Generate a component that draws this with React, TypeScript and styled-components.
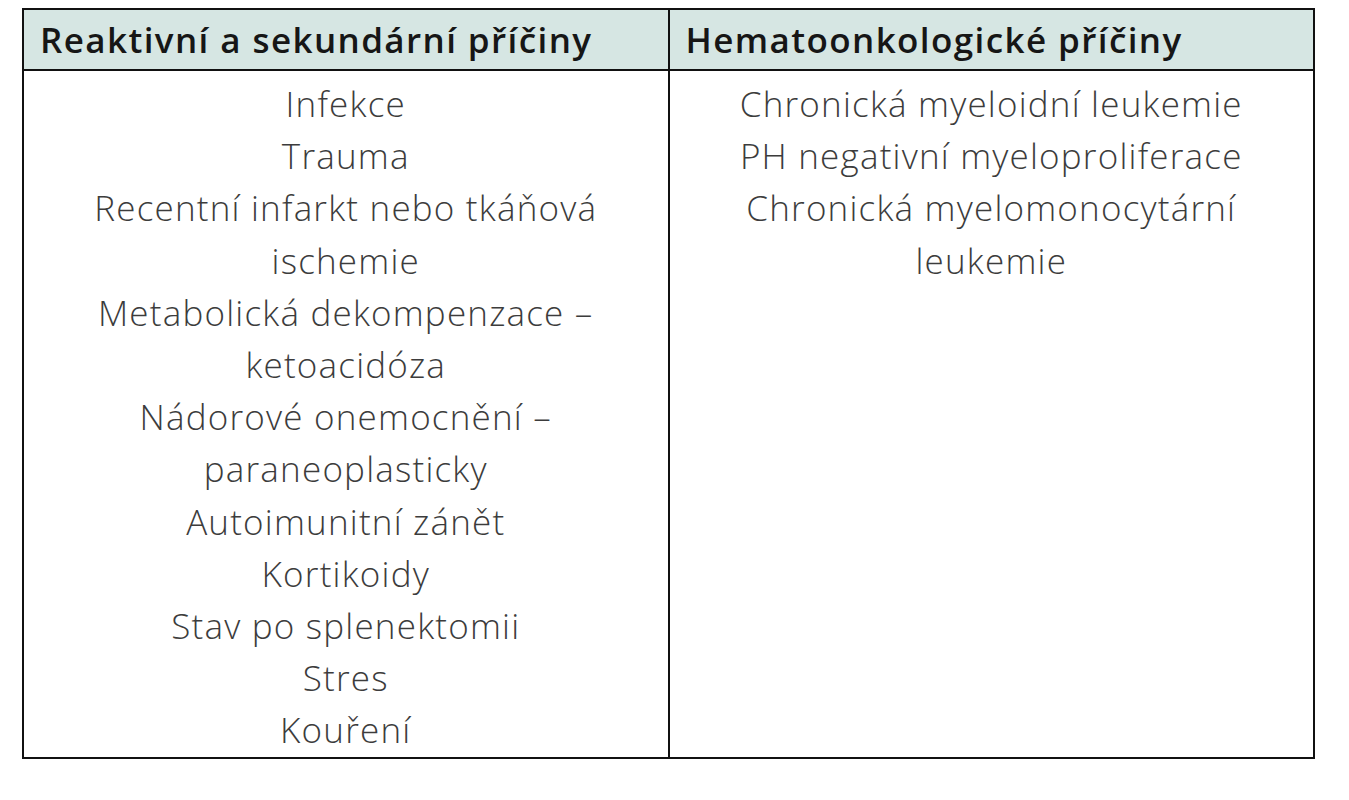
import React from "react";
import styled, { createGlobalStyle } from "styled-components";

const GlobalStyle = createGlobalStyle`
  html, body {
    margin: 0;
    padding: 0;
    background: #ffffff;
  }
`;

const Page = styled.main`
  padding: 8px 0 0 22px;
  font-family: "Open Sans", "Liberation Sans", sans-serif;
`;

const Table = styled.table`
  width: 1293px;
  border-collapse: collapse;
  table-layout: fixed;
  border: 2px solid #111;
`;

const HeadCell = styled.th`
  height: 59px;
  padding: 0 0 0 16px;
  background-color: #d6e6e3;
  border: 2px solid #111;
  text-align: left;
  font-size: 35px;
  font-weight: 600;
  color: #161616;
  letter-spacing: 1.4px;
  white-space: nowrap;
`;

const Cell = styled.td`
  vertical-align: top;
  padding: 7px 0 0;
  border-left: 2px solid #111;
  border-right: 2px solid #111;
  text-align: center;
`;

const List = styled.ul`
  list-style: none;
  margin: 0;
  padding: 0;
`;

const Item = styled.li`
  font-size: 35px;
  font-weight: 300;
  line-height: 52.2px;
  color: #3c3c3c;
  letter-spacing: 1.2px;
`;

const reactive: string[][] = [
  ["Infekce"],
  ["Trauma"],
  ["Recentní infarkt nebo tkáňová", "ischemie"],
  ["Metabolická dekompenzace –", "ketoacidóza"],
  ["Nádorové onemocnění –", "paraneoplasticky"],
  ["Autoimunitní zánět"],
  ["Kortikoidy"],
  ["Stav po splenektomii"],
  ["Stres"],
  ["Kouření"],
];

const hemato: string[][] = [
  ["Chronická myeloidní leukemie"],
  ["PH negativní myeloproliferace"],
  ["Chronická myelomonocytární", "leukemie"],
];

const CauseList = ({ items }: { items: string[][] }) => (
  <List>
    {items.map((lines, i) => (
      <Item key={i}>
        {lines.map((line, j) => (
          <React.Fragment key={j}>
            {j > 0 && <br />}
            {line}
          </React.Fragment>
        ))}
      </Item>
    ))}
  </List>
);

export default function App() {
  return (
    <>
      <GlobalStyle />
      <Page>
        <Table>
          <colgroup>
            <col style={{ width: "50%" }} />
            <col style={{ width: "50%" }} />
          </colgroup>
          <thead>
            <tr>
              <HeadCell>Reaktivní a sekundární příčiny</HeadCell>
              <HeadCell>Hematoonkologické příčiny</HeadCell>
            </tr>
          </thead>
          <tbody>
            <tr>
              <Cell>
                <CauseList items={reactive} />
              </Cell>
              <Cell>
                <CauseList items={hemato} />
              </Cell>
            </tr>
          </tbody>
        </Table>
      </Page>
    </>
  );
}
